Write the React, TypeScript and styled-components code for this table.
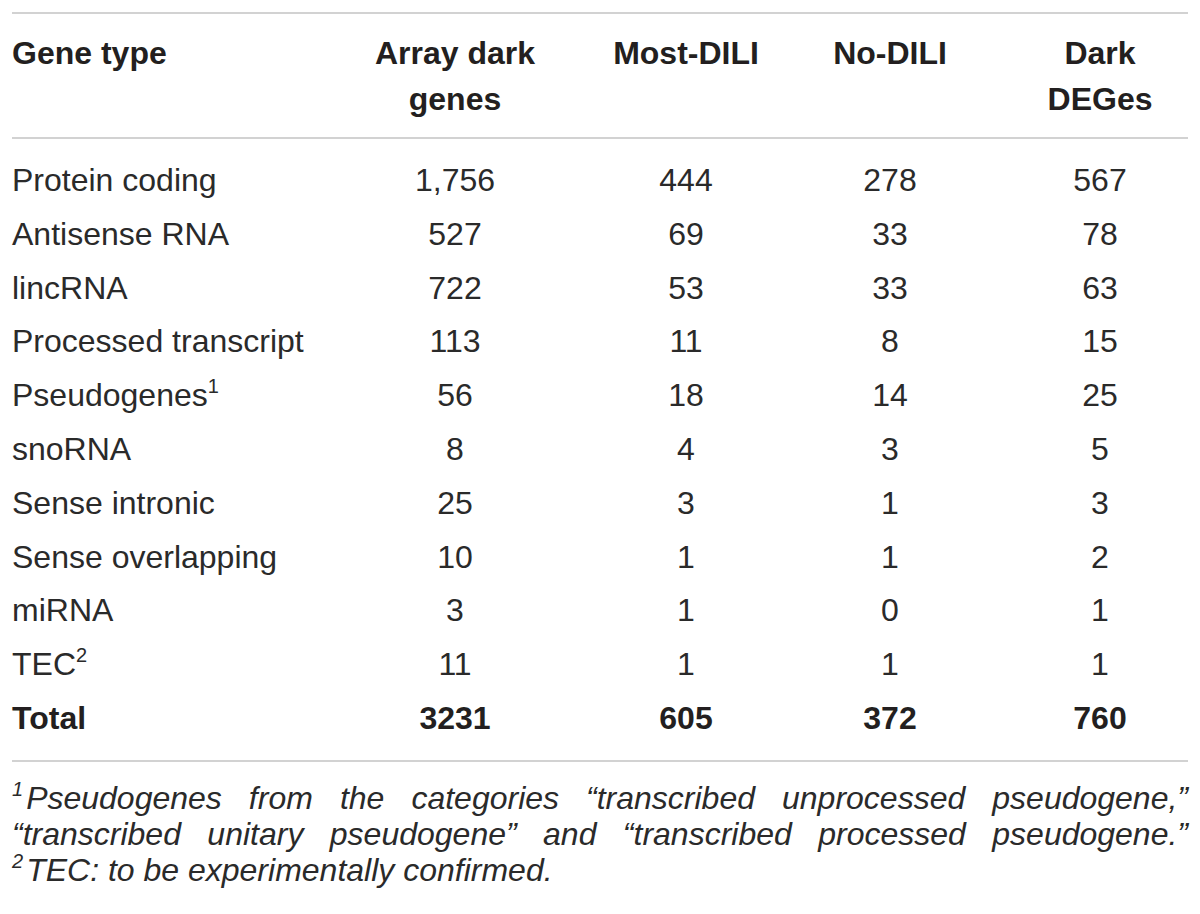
import * as React from 'react'
import styled, { createGlobalStyle } from 'styled-components'

const GlobalStyle = createGlobalStyle`
  html, body {
    margin: 0;
    padding: 0;
    background: #ffffff;
  }
  body {
    font-family: 'Liberation Sans', Arial, Helvetica, sans-serif;
    color: #231f20;
  }
`

const Page = styled.div`
  width: 1176px;
  padding: 12px 12px 0;
`

const Table = styled.div`
  display: grid;
  grid-template-columns: 294px 298px 164px 244px 176px;
  border-top: 2px solid #d2d2d2;
  border-bottom: 2px solid #d2d2d2;
`

const HeadCell = styled.div<{ $left?: boolean }>`
  font-size: 32px;
  font-weight: bold;
  line-height: 46px;
  padding: 16px 0 15px;
  text-align: ${props => (props.$left ? 'left' : 'center')};
  border-bottom: 2px solid #d2d2d2;
`

const Cell = styled.div<{ $left?: boolean; $bold?: boolean; $first?: boolean; $last?: boolean }>`
  font-size: 32px;
  font-weight: ${props => (props.$bold ? 'bold' : 'normal')};
  color: ${props => (props.$bold ? '#231f20' : '#2a2a2a')};
  line-height: 53.8px;
  height: 53.8px;
  white-space: nowrap;
  text-align: ${props => (props.$left ? 'left' : 'center')};
  padding-top: ${props => (props.$first ? '15px' : '0')};
  padding-bottom: ${props => (props.$last ? '14px' : '0')};
`

const Sup = styled.sup`
  font-size: 20px;
  line-height: 0;
  vertical-align: 13px;
`

const Notes = styled.div`
  padding-top: 18px;
  font-size: 32px;
  font-style: italic;
  line-height: 36px;
  color: #2a2a2a;
`

const NoteLine = styled.div<{ $justify?: boolean }>`
  text-align: ${props => (props.$justify ? 'justify' : 'left')};
  text-align-last: ${props => (props.$justify ? 'justify' : 'left')};
  white-space: ${props => (props.$justify ? 'normal' : 'nowrap')};
`

const NoteSup = styled.sup`
  font-size: 20px;
  line-height: 0;
  vertical-align: 13px;
  margin-right: 3px;
`

type Row = {
  label: React.ReactNode
  values: string[]
}

const rows: Row[] = [
  { label: 'Protein coding', values: ['1,756', '444', '278', '567'] },
  { label: 'Antisense RNA', values: ['527', '69', '33', '78'] },
  { label: 'lincRNA', values: ['722', '53', '33', '63'] },
  { label: 'Processed transcript', values: ['113', '11', '8', '15'] },
  { label: <>Pseudogenes<Sup>1</Sup></>, values: ['56', '18', '14', '25'] },
  { label: 'snoRNA', values: ['8', '4', '3', '5'] },
  { label: 'Sense intronic', values: ['25', '3', '1', '3'] },
  { label: 'Sense overlapping', values: ['10', '1', '1', '2'] },
  { label: 'miRNA', values: ['3', '1', '0', '1'] },
  { label: <>TEC<Sup>2</Sup></>, values: ['11', '1', '1', '1'] },
]

const total = ['3231', '605', '372', '760']

export default function App(): JSX.Element {
  return (
    <Page>
      <GlobalStyle />
      <Table>
        <HeadCell $left>Gene type</HeadCell>
        <HeadCell>
          Array dark
          <br />
          genes
        </HeadCell>
        <HeadCell>Most-DILI</HeadCell>
        <HeadCell>No-DILI</HeadCell>
        <HeadCell>
          Dark
          <br />
          DEGes
        </HeadCell>

        {rows.map((row, i) => (
          <React.Fragment key={i}>
            <Cell $left $first={i === 0}>
              {row.label}
            </Cell>
            {row.values.map((v, j) => (
              <Cell key={j} $first={i === 0}>
                {v}
              </Cell>
            ))}
          </React.Fragment>
        ))}

        <Cell $left $bold $last>
          Total
        </Cell>
        {total.map((v, j) => (
          <Cell key={j} $bold $last>
            {v}
          </Cell>
        ))}
      </Table>

      <Notes>
        <NoteLine $justify>
          <NoteSup>1</NoteSup>Pseudogenes from the categories “transcribed unprocessed pseudogene,”
        </NoteLine>
        <NoteLine $justify>
          “transcribed unitary pseudogene” and “transcribed processed pseudogene.”
        </NoteLine>
        <NoteLine>
          <NoteSup>2</NoteSup>TEC: to be experimentally confirmed.
        </NoteLine>
      </Notes>
    </Page>
  )
}
